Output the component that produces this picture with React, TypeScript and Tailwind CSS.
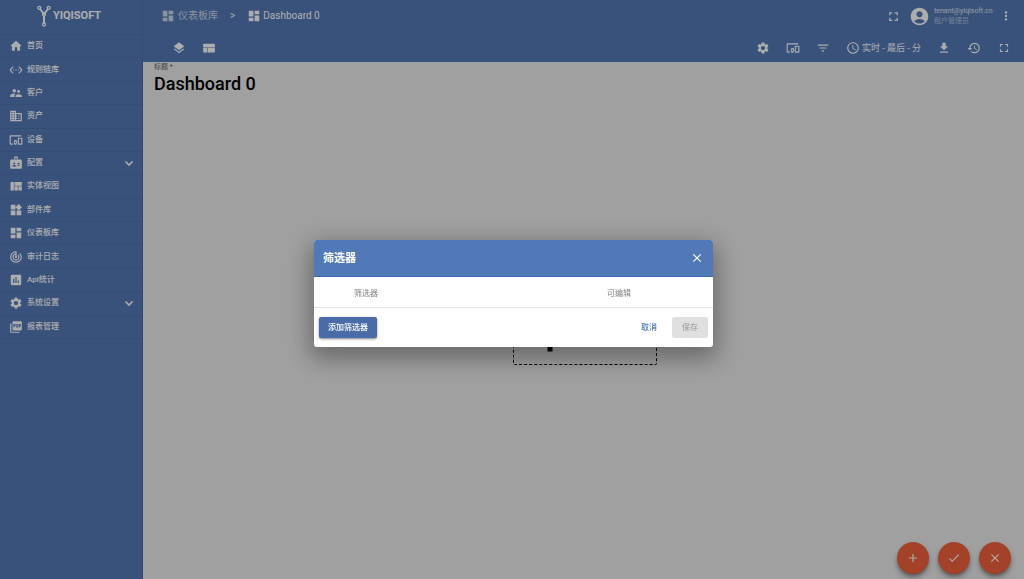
import React from "react";
import type { IconType } from "react-icons";
import {
  MdAccessTime,
  MdAccountCircle,
  MdAdd,
  MdCheck,
  MdClose,
  MdDashboard,
  MdDevicesOther,
  MdDomain,
  MdFilterList,
  MdFullscreen,
  MdGetApp,
  MdHistory,
  MdHome,
  MdInsertChart,
  MdLayers,
  MdMoreVert,
  MdPictureAsPdf,
  MdSettings,
  MdSettingsEthernet,
  MdSupervisorAccount,
  MdTrackChanges,
  MdWidgets,
} from "react-icons/md";

type IconProps = { className?: string };

const BadgeIcon = ({ className }: IconProps) => (
  <svg viewBox="0 0 24 24" className={className} fill="currentColor" fillRule="evenodd">
    <path d="M10 1h4a1 1 0 0 1 1 1v4h5a2 2 0 0 1 2 2v12a2 2 0 0 1-2 2H4a2 2 0 0 1-2-2V8a2 2 0 0 1 2-2h5V2a1 1 0 0 1 1-1zm1 2v4h2V3zM9 11a1.700 1.700 0 1 0 0 3.400 1.700 1.700 0 0 0 0-3.400zm-3.500 7h7v-1c0-1.200-2.300-1.700-3.500-1.700s-3.500.5-3.500 1.700zm9-6v1.500h4V12zm0 3v1.500h4V15z" />
  </svg>
);

const QuiltIcon = ({ className }: IconProps) => (
  <svg viewBox="1 0 23 23" className={className} fill="currentColor">
    <path d="M10 19h5.500v-7H10v7zm-6.500 0H9V5H3.500v14zm13 0H22v-7h-5.500v7zM10 5v6h12V5H10z" />
  </svg>
);

const LayoutIcon = ({ className }: IconProps) => (
  <svg viewBox="0 0 24 24" className={className} fill="currentColor">
    <path d="M2 19.500h6.500V12H2v7.500zm7.500 0H22V12H9.500v7.500zM2 4.500V11h20V4.500H2z" />
  </svg>
);

const ChevronIcon = ({ className }: IconProps) => (
  <svg viewBox="0 0 12 12" className={className} fill="none" stroke="currentColor" strokeWidth="1.600">
    <path d="M2.500 4.500L6 8l3.500-3.500" />
  </svg>
);

const Logo = () => (
  <svg viewBox="0 0 14 22" className="h-[22px] w-[14px]" fill="none" stroke="currentColor">
    <path strokeWidth="2" d="M3 4l4 5 4-5M7 11v7" />
    <g strokeWidth="1.3">
      <circle cx="2.300" cy="2.800" r="1.500" />
      <circle cx="11.700" cy="2.800" r="1.500" />
      <circle cx="7" cy="9.500" r="1.500" />
      <circle cx="7" cy="19.500" r="1.500" />
    </g>
  </svg>
);

type MenuItem = {
  label: string;
  icon: IconType | React.FC<IconProps>;
  expandable?: boolean;
};

const menu: MenuItem[] = [
  { label: "首页", icon: MdHome },
  { label: "规则链库", icon: MdSettingsEthernet },
  { label: "客户", icon: MdSupervisorAccount },
  { label: "资产", icon: MdDomain },
  { label: "设备", icon: MdDevicesOther },
  { label: "配置", icon: BadgeIcon, expandable: true },
  { label: "实体视图", icon: QuiltIcon },
  { label: "部件库", icon: MdWidgets },
  { label: "仪表板库", icon: MdDashboard },
  { label: "审计日志", icon: MdTrackChanges },
  { label: "Api统计", icon: MdInsertChart },
  { label: "系统设置", icon: MdSettings, expandable: true },
  { label: "报表管理", icon: MdPictureAsPdf },
];

const Sidebar = () => (
  <aside className="w-[143px] shrink-0 border-r border-[#4d72ae] bg-[#5479b7] text-white">
    <div className="flex h-[34px] items-center gap-[2px] pb-[3px] pl-[37px]">
      <Logo />
      <span className="text-[11px] font-bold leading-4">YIQISOFT</span>
    </div>
    <nav>
      <ul className="grid h-[305px] auto-rows-fr border-b border-[#4d72ae]">
        {menu.map(({ label, icon: Icon, expandable }) => (
          <li key={label} className="border-t border-[#4d72ae]">
            <a href="#" className="flex h-full items-center gap-1 pl-[9px] pr-[7px]">
              <Icon className="size-[14px]" />
              <span className="flex-1 text-[8px] font-medium leading-3">{label}</span>
              {expandable && <ChevronIcon className="size-3" />}
            </a>
          </li>
        ))}
      </ul>
    </nav>
  </aside>
);

const Header = () => (
  <header className="h-[62px] bg-[#5479b7] text-white">
    <div className="flex h-8 items-center justify-between pl-[18px] pr-[11px]">
      <nav className="flex items-center text-[10px] leading-4">
        <a href="#" className="flex items-center gap-[3px] opacity-70">
          <MdDashboard className="size-[14px]" />
          <span>仪表板库</span>
        </a>
        <span className="px-3">&gt;</span>
        <a href="#" className="flex items-center gap-[2px]">
          <MdDashboard className="size-[14px]" />
          <span>Dashboard 0</span>
        </a>
      </nav>
      <div className="flex items-center">
        <button aria-label="全屏" className="mr-2">
          <MdFullscreen className="size-[15px]" />
        </button>
        <MdAccountCircle className="mr-1 size-[21px]" />
        <div className="w-[61px] text-[7px] leading-[10px]">
          <div className="opacity-80">tenant@yiqisoft.cn</div>
          <div className="opacity-50">租户管理员</div>
        </div>
        <button aria-label="更多" className="ml-1">
          <MdMoreVert className="size-[14px]" />
        </button>
      </div>
    </div>
    <div className="flex h-[30px] items-center justify-between pl-[29px] pr-[13px] pt-[2px]">
      <div className="flex items-center gap-4">
        <button aria-label="图层">
          <MdLayers className="size-[14px]" />
        </button>
        <button aria-label="布局">
          <LayoutIcon className="size-[14px]" />
        </button>
      </div>
      <div className="flex items-center gap-4">
        <button aria-label="设置">
          <MdSettings className="size-[14px]" />
        </button>
        <button aria-label="实体别名">
          <MdDevicesOther className="size-[14px]" />
        </button>
        <button aria-label="筛选器">
          <MdFilterList className="size-[14px]" />
        </button>
        <button className="flex items-center gap-[2px] text-[9px] leading-3">
          <MdAccessTime className="size-[14px]" />
          <span>实时 - 最后 - 分</span>
        </button>
        <button aria-label="导出">
          <MdGetApp className="size-[14px]" />
        </button>
        <button aria-label="版本">
          <MdHistory className="size-[14px]" />
        </button>
        <button aria-label="全屏">
          <MdFullscreen className="size-[14px]" />
        </button>
      </div>
    </div>
  </header>
);

const FabButton = ({ label, icon: Icon }: { label: string; icon: IconType }) => (
  <button
    aria-label={label}
    className="flex size-8 items-center justify-center rounded-full bg-[#f0623b] text-white shadow-md shadow-black/40"
  >
    <Icon className="size-[14px]" />
  </button>
);

const FilterDialog = () => (
  <div className="fixed inset-0 flex items-center justify-center bg-black/32 pl-[3px] pt-2">
    <div
      role="dialog"
      aria-labelledby="dialog-title"
      className="w-[399px] overflow-hidden rounded-[3px] bg-white shadow-[0_8px_24px_4px_rgba(0,0,0,0.35)]"
    >
      <div className="flex h-[37px] items-center justify-between border-b border-[#3f6bb3] bg-[#5279b7] px-[9px] text-white">
        <h2 id="dialog-title" className="pt-[2px] text-[11px] font-bold leading-4">
          筛选器
        </h2>
        <button aria-label="关闭">
          <MdClose className="size-[14px]" />
        </button>
      </div>
      <div className="grid h-[31px] grid-cols-[293px_1fr] items-center border-b border-[#e4e4e4] pt-[3px] text-[8px] leading-3 text-[#808080]">
        <span className="pl-10">筛选器</span>
        <span>可编辑</span>
      </div>
      <div className="flex h-[39px] items-center px-[5px] text-[8px] font-medium leading-3">
        <button className="h-[21px] rounded-[2px] bg-[#496ba7] px-[9px] text-white shadow-sm shadow-black/40">
          添加筛选器
        </button>
        <button className="ml-auto mr-[15px] text-[#5279b7]">取消</button>
        <button disabled className="h-[21px] w-9 rounded-[2px] bg-[#e0e0e0] text-[#a6a6a6]">
          保存
        </button>
      </div>
    </div>
  </div>
);

const App: React.FC = () => {
  return (
    <div className="flex min-h-screen bg-[#ececec] font-[Roboto,'Noto_Sans_CJK_SC',sans-serif]">
      <Sidebar />
      <div className="flex min-w-0 flex-1 flex-col">
        <Header />
        <main className="flex flex-1 flex-col">
          <div className="px-[11px] text-black">
            <div className="text-[7px] leading-[10px] opacity-60">标题 *</div>
            <h1 className="text-[18px] font-medium leading-6">Dashboard 0</h1>
          </div>
          <div className="flex flex-1 flex-col items-center justify-center pl-[2px]">
            <button
              aria-label="添加部件"
              className="flex h-[92px] w-36 items-end rounded-[2px] border border-dashed border-black pl-[6px]"
            >
              <MdAdd className="size-[60px]" />
            </button>
          </div>
          <div className="flex justify-end gap-[9px] px-[13px] pb-[5px]">
            <FabButton label="添加" icon={MdAdd} />
            <FabButton label="应用" icon={MdCheck} />
            <FabButton label="取消" icon={MdClose} />
          </div>
        </main>
      </div>
      <FilterDialog />
    </div>
  );
};

export default App;
